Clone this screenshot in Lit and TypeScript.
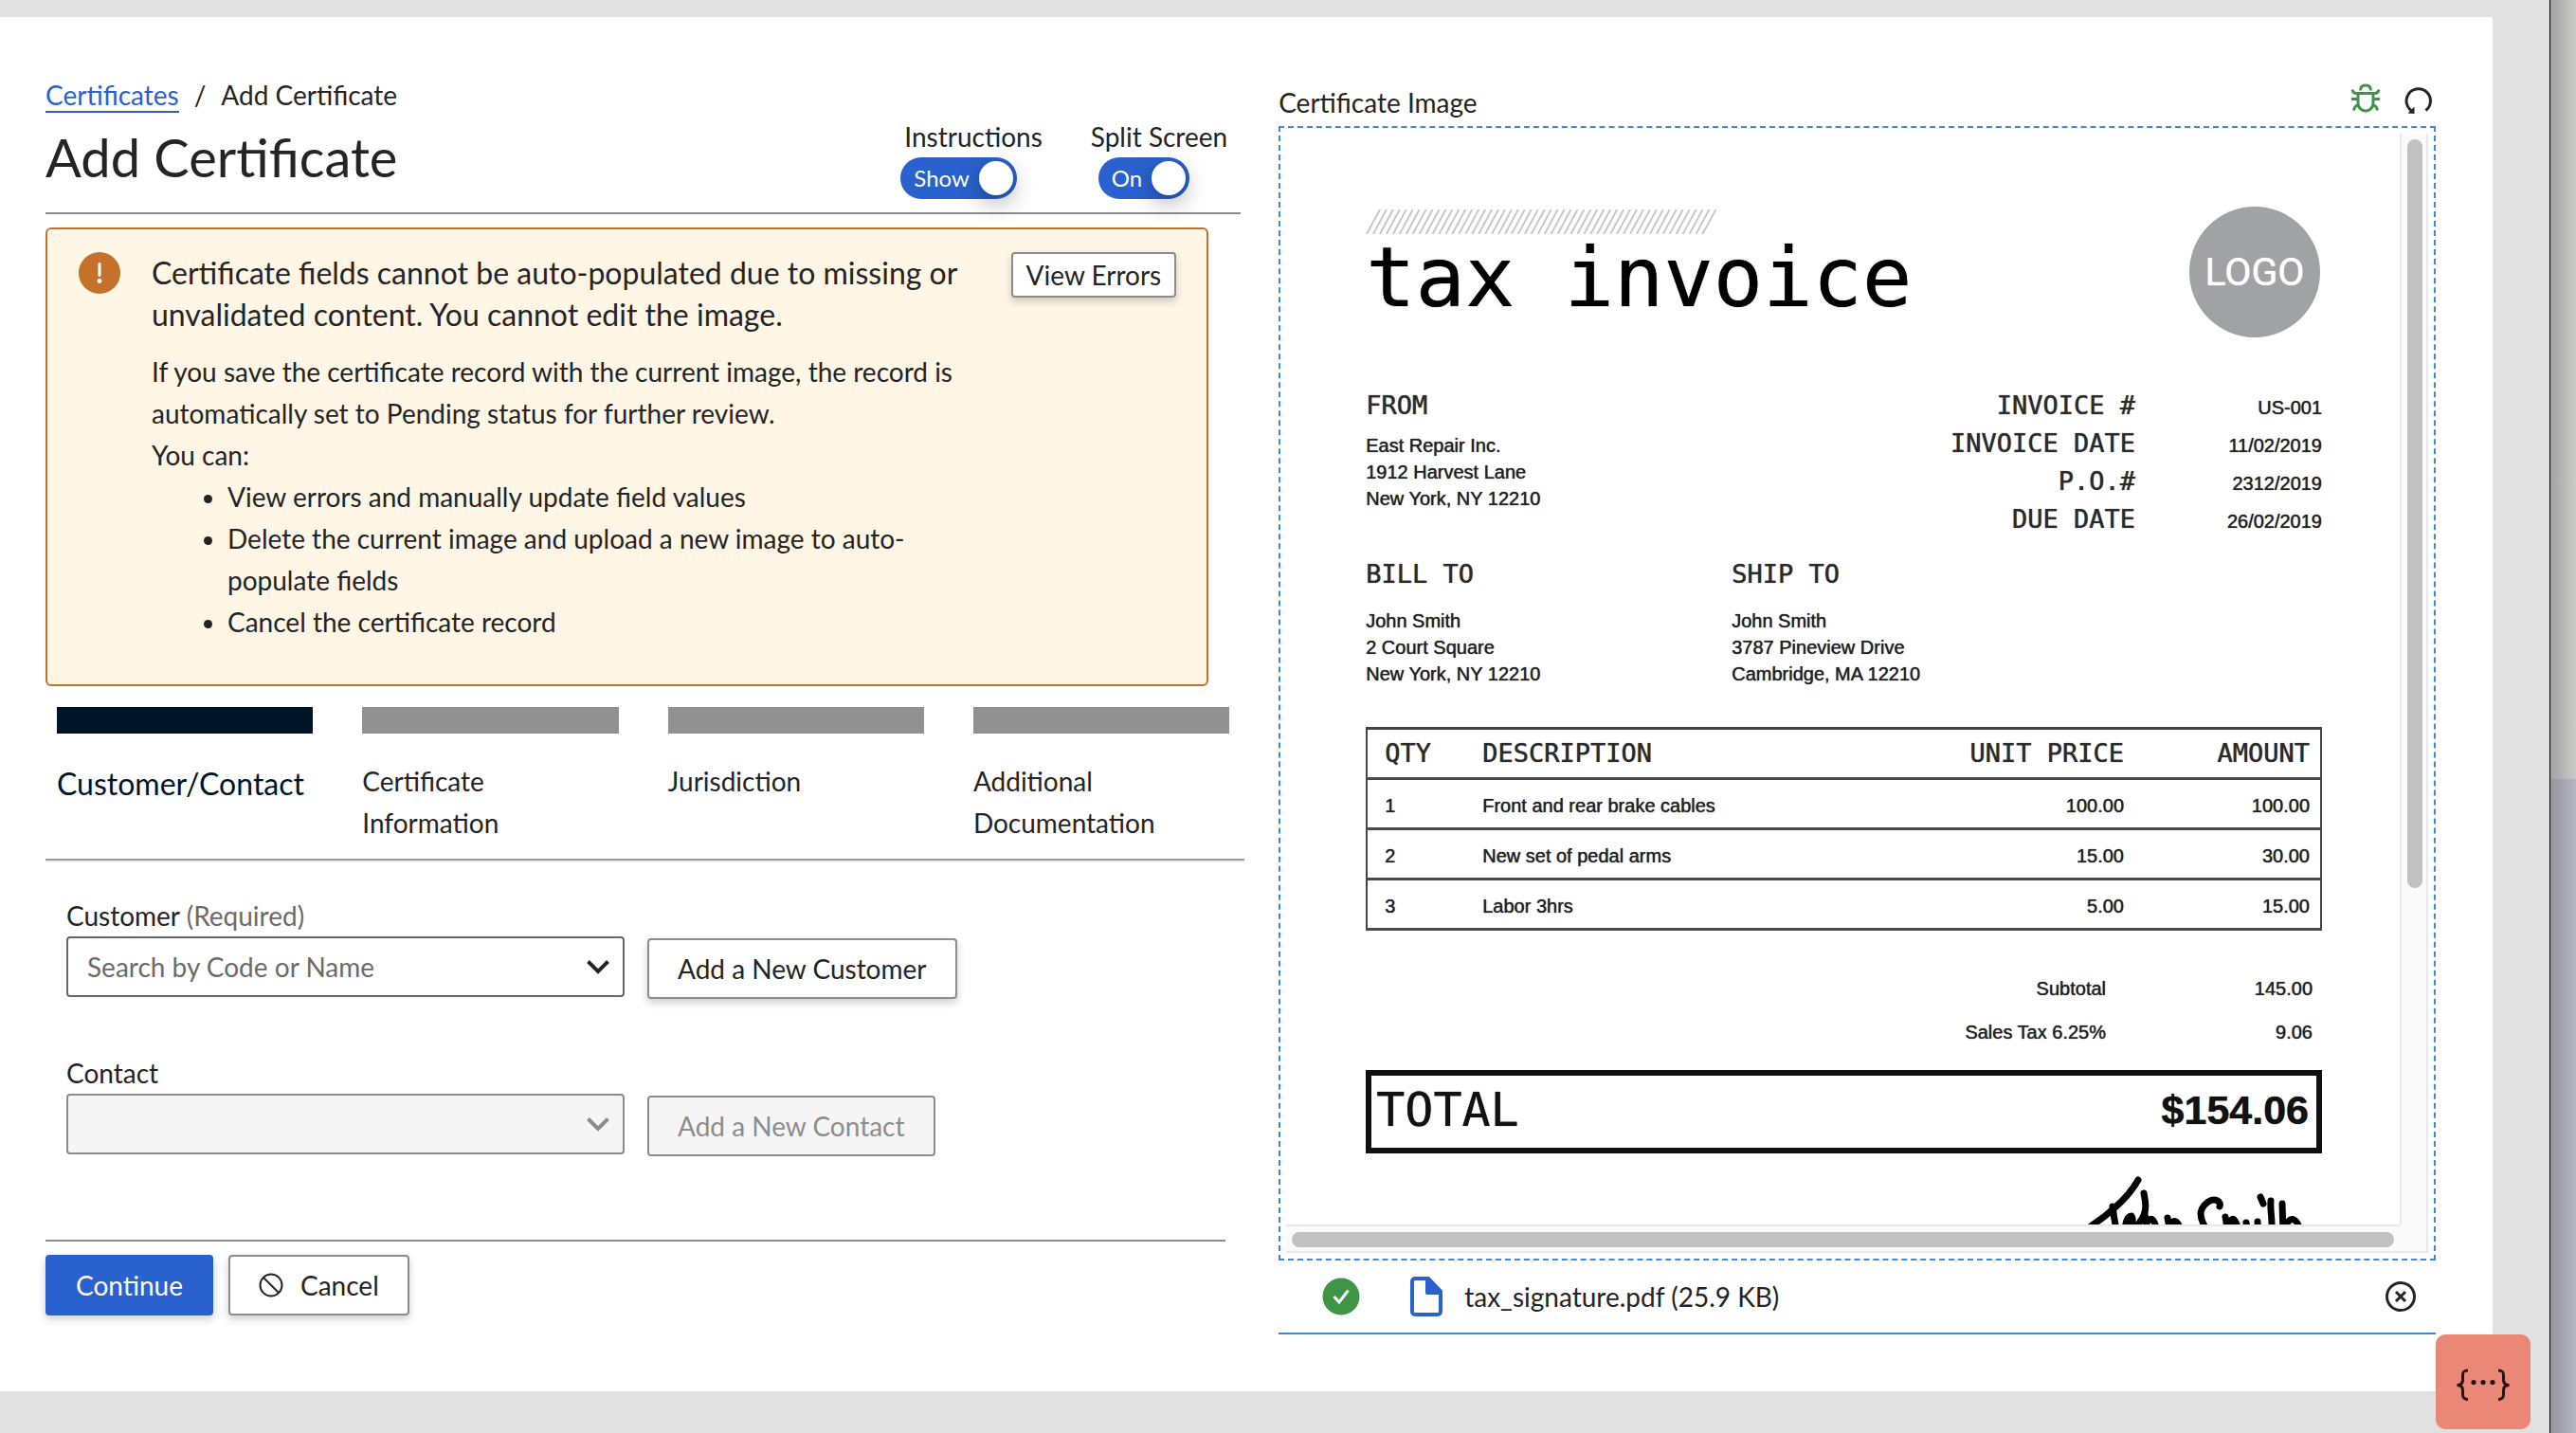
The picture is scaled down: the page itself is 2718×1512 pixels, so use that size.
import { LitElement, html, css, svg } from "lit";
import { customElement, property, state } from "lit/decorators.js";

const HATCH = Array.from({ length: 52 }, (_, i) => i * 6.95);

const STEPS = [
  { label: "Customer/Contact", active: true },
  { label: "Certificate Information", active: false },
  { label: "Jurisdiction", active: false },
  { label: "Additional Documentation", active: false },
];

const META = [
  ["INVOICE #", "US-001"],
  ["INVOICE DATE", "11/02/2019"],
  ["P.O.#", "2312/2019"],
  ["DUE DATE", "26/02/2019"],
];

const ITEMS = [
  ["1", "Front and rear brake cables", "100.00", "100.00"],
  ["2", "New set of pedal arms", "15.00", "30.00"],
  ["3", "Labor 3hrs", "5.00", "15.00"],
];

@customElement("tax-invoice")
export class TaxInvoice extends LitElement {
  static styles = css`
    :host {
      display: block;
      padding: 77px 82px 0 84px;
      font: 20px/28px "Liberation Sans", Arial, sans-serif;
      color: #222;
      text-shadow: 0 0 1px currentColor;
    }
    * { box-sizing: border-box; }
    h2, h3, p, dl, dd, dt { margin: 0; font-weight: 400; }
    .top { display: flex; justify-content: space-between; align-items: flex-start; padding-right: 2px; }
    .hatch { display: block; margin-top: 3px; width: 372px; height: 26px; stroke: #c8c8c8; stroke-width: 2; }
    h2 { font: 87px/92px "DejaVu Sans Mono", monospace; color: #000; white-space: pre; }
    .logo {
      width: 138px; height: 138px; border-radius: 50%; background: #a1a2a4; color: #fff;
      display: flex; align-items: center; justify-content: center;
      font: 41px/48px Roboto, Arial, sans-serif;
    }
    h3, dt, th { font: 27px/40px "DejaVu Sans Mono", monospace; color: #2b2b2b; }
    .origin { display: flex; justify-content: space-between; margin-top: 52px; }
    .origin p { margin-top: 8px; }
    .meta { display: grid; grid-template-columns: auto 197px; grid-auto-rows: 40px; align-items: baseline; line-height: 40px; text-align: right; }
    .parties { display: flex; margin-top: 18px; }
    .party { flex: 0 0 386px; }
    .party p { margin-top: 15px; }
    table { width: 100%; margin-top: 42px; border-collapse: collapse; table-layout: fixed; border: 2px solid #444; border-width: 3px 2px; }
    th, td { height: 53px; padding: 0; text-align: left; border-bottom: 3px solid #4a4a4a; }
    td { padding-top: 4px; }
    .qty { width: 122px; padding-left: 18px; }
    .price { width: 200px; text-align: right; }
    .amount { width: 208px; padding-right: 11px; text-align: right; }
    .sums { display: grid; grid-template-columns: 1fr 218px; margin-top: 38px; padding-right: 10px; line-height: 46px; text-align: right; }
    .sums dt { font: inherit; color: inherit; }
    .total {
      display: flex; justify-content: space-between; align-items: center; height: 88px; margin-top: 17px;
      padding: 0 8px 4px 5px; border: 6px solid #111; color: #111;
      font: 50px/64px "DejaVu Sans Mono", monospace;
    }
    .total strong { font: bold 43px/64px "Liberation Sans", Arial, sans-serif; }
    .sign { display: block; width: 232px; height: 90px; margin: 24px 18px 0 auto; fill: none; stroke: #000; stroke-width: 7; stroke-linecap: round; stroke-linejoin: round; }
  `;

  render() {
    return html`
      <div class="top">
        <div>
          <svg class="hatch" viewBox="0 0 372 26" aria-hidden="true">
            ${HATCH.map((x) => svg`<line x1=${x + 1} y1="26" x2=${x + 15} y2="0"></line>`)}
          </svg>
          <h2>tax invoice</h2>
        </div>
        <div class="logo">LOGO</div>
      </div>
      <div class="origin">
        <div>
          <h3>FROM</h3>
          <p>East Repair Inc.<br />1912 Harvest Lane<br />New York, NY 12210</p>
        </div>
        <dl class="meta">${META.map(([k, v]) => html`<dt>${k}</dt><dd>${v}</dd>`)}</dl>
      </div>
      <div class="parties">
        <div class="party">
          <h3>BILL TO</h3>
          <p>John Smith<br />2 Court Square<br />New York, NY 12210</p>
        </div>
        <div class="party">
          <h3>SHIP TO</h3>
          <p>John Smith<br />3787 Pineview Drive<br />Cambridge, MA 12210</p>
        </div>
      </div>
      <table>
        <thead>
          <tr>
            <th class="qty" scope="col">QTY</th>
            <th scope="col">DESCRIPTION</th>
            <th class="price" scope="col">UNIT PRICE</th>
            <th class="amount" scope="col">AMOUNT</th>
          </tr>
        </thead>
        <tbody>
          ${ITEMS.map(
            ([q, d, p, a]) => html`<tr>
              <td class="qty">${q}</td><td>${d}</td><td class="price">${p}</td><td class="amount">${a}</td>
            </tr>`
          )}
        </tbody>
      </table>
      <dl class="sums">
        <dt>Subtotal</dt><dd>145.00</dd>
        <dt>Sales Tax 6.25%</dt><dd>9.06</dd>
      </dl>
      <div class="total"><span>TOTAL</span><strong>$154.06</strong></div>
      <svg class="sign" viewBox="0 0 232 90" role="img" aria-label="Signature">
        <path d="M56 4C48 18 38 28 28 36C20 44 12 48 2 56" />
        <path d="M29 32C30 40 31 48 34 60" />
        <path d="M42 56C43 47 46 42 49 42C52 46 49 54 46 60M50 48L56 60M62 18C64 28 66 38 58 48C55 52 56 58 58 60M63 40L66 60M66 48C70 42 74 46 76 60" />
        <path d="M87 44L90 60M90 50C95 45 98 47 102 60" />
        <path d="M142 32C144 26 137 23 130 27C122 33 118 40 128 56" />
        <path d="M148 43L151 60M152 52C155 42 158 42 163 60M170 49L172 60M182 48L183 60" />
        <path d="M185 22L188 29M196 26C195 36 198 46 197 60M208 29L209 60M211 54C216 42 222 42 228 58" />
      </svg>
    `;
  }
}

@customElement("toggle-switch")
export class ToggleSwitch extends LitElement {
  @property() label = "";
  @property() text = "";
  static styles = css`
    :host { display: block; color: #242424; }
    .caption { display: block; padding: 0 4px; line-height: 44px; cursor: pointer; }
    .track {
      position: relative; display: inline-flex; align-items: center; gap: 10px; height: 44px;
      padding: 0 4px 0 14px; border-radius: 22px; background: #2962cf; color: #fff; font-size: 24px; vertical-align: top;
    }
    input { position: absolute; inset: 0; width: 100%; height: 100%; margin: 0; opacity: 0; cursor: pointer; }
    .knob { width: 36px; height: 36px; border-radius: 50%; background: #fff; box-shadow: 0 8px 24px rgba(0, 0, 0, 0.32); }
    :host([inset]) .track { margin-left: 8px; }
    :host([inset]) .caption { padding: 0; }
  `;
  render() {
    return html`
      <label class="caption" for="box">${this.label}</label>
      <span class="track"><span>${this.text}</span><span class="knob"></span>
        <input id="box" type="checkbox" role="switch" checked />
      </span>
    `;
  }
}

@customElement("app-root")
export class AppRoot extends LitElement {
  @state() private steps = STEPS;

  static styles = css`
    :host {
      display: flex;
      min-height: 100vh;
      background: #e1e1e1;
      font: 28px/44px Lato, "Open Sans", sans-serif;
      color: #242424;
    }
    * { box-sizing: border-box; }
    h1, h2, p, ul, ol { margin: 0; padding: 0; font-weight: 400; }
    button, select { font: inherit; color: inherit; }
    button { cursor: pointer; }

    .window { flex: 1; min-width: 0; padding: 18px 60px 44px 0; }
    .page {
      display: grid; grid-template-columns: 57fr 55fr; gap: 36px;
      min-height: 1450px; padding: 60px 60px 0 48px; background: #fff;
    }
    .page > * { min-width: 0; }
    .desktop { flex: 0 0 28px; display: flex; flex-direction: column; border-left: 1px solid #000; }
    .desktop .upper { flex: 822; background: linear-gradient(90deg, #a2a2a2, #cbcbca); }
    .desktop .lower { flex: 690; background: linear-gradient(90deg, #94959c, #b4b6c3); }

    .head { display: flex; justify-content: space-between; align-items: flex-end; margin-right: 4px; padding: 0 14px 14px 0; border-bottom: 2px solid #8c8c8c; }
    .crumbs { display: flex; gap: 16px; list-style: none; }
    .crumbs a { display: inline-block; line-height: 34px; color: #2962cf; text-decoration: none; border-bottom: 2px solid #2962cf; }
    .crumbs li { height: 44px; }
    h1 { margin: 12px 0; font-size: 56px; line-height: 64px; }
    .toggles { display: flex; gap: 47px; }

    .alert {
      display: flex; align-items: flex-start; margin: 14px 38px 0 0; padding: 24px 32px 44px 33px;
      background: #fff6e6; border: 2px solid #c5702b; border-radius: 6px;
    }
    .alert > svg { flex: none; width: 44px; height: 44px; }
    .message { flex: 1; margin: 0 32px 0 33px; }
    .message h2 { margin-bottom: 16px; font-size: 32px; line-height: 44px; }
    .message ul { padding-left: 80px; }

    .btn {
      display: inline-flex; align-items: center; justify-content: center; gap: 18px; height: 64px; padding: 0 30px;
      background: #fff; border: 2px solid #8c8c8c; border-radius: 4px; line-height: 44px; white-space: nowrap;
      box-shadow: 0 4px 8px rgba(20, 40, 30, 0.22);
    }
    .btn.small { height: 48px; padding: 0 14px; }
    .btn.primary { background: #2962cf; border-color: #2962cf; color: #fff; }
    .btn:disabled { background: #f5f5f5; color: #8c8c8c; box-shadow: none; cursor: default; }
    .btn svg { width: 26px; height: 26px; fill: none; stroke: #242424; stroke-width: 2; }

    .steps { display: grid; grid-template-columns: repeat(4, 1fr); gap: 52px; list-style: none; margin-top: 22px; padding: 0 16px 0 12px; }
    .steps li::before { content: ""; display: block; height: 28px; margin-bottom: 28px; background: #919191; }
    .steps .active { font-size: 32px; line-height: 50px; color: #001427; }
    .steps .active::before { background: #001427; }
    hr { margin: 16px 0 0; border: 2px solid #999; border-width: 2px 0; border-bottom-color: #eee; }

    .form { padding: 34px 0 88px 22px; }
    .field + .field { margin-top: 56px; }
    .field label { display: block; }
    .field small { font-size: inherit; color: #6b6b6b; }
    .row { display: flex; gap: 24px; align-items: flex-start; }
    .row .btn { margin-top: 2px; }
    .combo { position: relative; flex: 0 1 589px; }
    .combo select {
      appearance: none; display: block; width: 100%; height: 64px; padding: 0 60px 0 20px;
      background: #fff; border: 2px solid #666; border-radius: 4px; color: #6b6b6b;
    }
    .combo select:disabled { background: #f5f5f5; border-color: #8c8c8c; opacity: 1; }
    .combo svg { position: absolute; right: 15px; top: 24px; width: 26px; height: 16px; fill: none; stroke: #242424; stroke-width: 4; pointer-events: none; }
    .combo select:disabled + svg { stroke: #8c8c8c; }
    .actions { display: flex; gap: 16px; margin-right: 20px; padding-top: 14px; border-top: 2px solid #8c8c8c; }

    .preview { padding-top: 8px; }
    .bar { display: flex; justify-content: space-between; align-items: flex-start; margin-bottom: 3px; padding-right: 3px; }
    .tools { display: flex; gap: 23px; }
    .tools button, .file button { display: block; padding: 0; border: 0; background: none; }
    .tools svg, .file button svg { display: block; width: 32px; height: 36px; fill: none; stroke-width: 3; }
    .bug { stroke: #3f9447; }
    .redo { stroke: #242424; }

    .drop { padding: 6px; border: 2px dashed #3c8bd9; }
    .viewer { display: grid; grid-template: minmax(0, 1fr) 28px / minmax(0, 1fr) 28px; height: 1181px; background: #fafafa; border: 2px solid #e8e8e8; border-width: 0 2px 2px 0; }
    .viewport { overflow: hidden; background: #fff; }
    .vtrack { padding: 6px 6px 0; border-left: 2px solid #e8e8e8; }
    .htrack { padding: 6px; border-top: 2px solid #e8e8e8; }
    .thumb { border-radius: 8px; background: #c1c1c1; }
    .vtrack .thumb { width: 16px; height: 69%; }
    .htrack .thumb { height: 16px; }

    .file { display: flex; align-items: center; height: 78px; padding: 0 21px 0 46px; border-bottom: 2px solid #3c8bd9; }
    .file .ok { width: 40px; height: 40px; margin-right: 53px; }
    .file .doc { width: 34px; height: 42px; margin-right: 23px; }
    .file button { margin-left: auto; }
    .file button svg { height: 32px; stroke: #242424; }

    .fab {
      position: absolute; right: 48px; top: 1408px; width: 100px; height: 100px; padding: 0;
      border: 0; border-radius: 10px; background: #eb8777;
    }
    .fab svg { display: block; width: 100px; height: 100px; fill: none; stroke: #241414; stroke-width: 3; }
  `;

  render() {
    return html`
      <div class="window">
        <main class="page">
          <section>
            <header class="head">
              <div>
                <ol class="crumbs">
                  <li><a href="#certificates">Certificates</a></li>
                  <li aria-hidden="true">/</li>
                  <li>Add Certificate</li>
                </ol>
                <h1>Add Certificate</h1>
              </div>
              <div class="toggles">
                <toggle-switch label="Instructions" text="Show"></toggle-switch>
                <toggle-switch inset label="Split Screen" text="On"></toggle-switch>
              </div>
            </header>

            <div class="alert" role="alert">
              <svg viewBox="0 0 44 44" aria-hidden="true">
                <circle cx="22" cy="22" r="22" fill="#c5702b" />
                <path d="M22 12.500V24.500" stroke="#fff" stroke-width="3" stroke-linecap="round" />
                <circle cx="22" cy="30.500" r="2.400" fill="#fff" />
              </svg>
              <div class="message">
                <h2>Certificate fields cannot be auto-populated due to missing or unvalidated content. You cannot edit the image.</h2>
                <p>If you save the certificate record with the current image, the record is automatically set to Pending status for further review.</p>
                <p>You can:</p>
                <ul>
                  <li>View errors and manually update field values</li>
                  <li>Delete the current image and upload a new image to auto-populate fields</li>
                  <li>Cancel the certificate record</li>
                </ul>
              </div>
              <button class="btn small">View Errors</button>
            </div>

            <ol class="steps">
              ${this.steps.map((s) => html`<li class=${s.active ? "active" : ""}>${s.label}</li>`)}
            </ol>
            <hr />

            <div class="form">
              <div class="field">
                <label for="customer">Customer <small>(Required)</small></label>
                <div class="row">
                  <div class="combo">
                    <select id="customer"><option>Search by Code or Name</option></select>
                    <svg viewBox="0 0 26 16" aria-hidden="true"><path d="M2.500 2.500L13 13L23.500 2.500" /></svg>
                  </div>
                  <button class="btn">Add a New Customer</button>
                </div>
              </div>
              <div class="field">
                <label for="contact">Contact</label>
                <div class="row">
                  <div class="combo">
                    <select id="contact" disabled><option></option></select>
                    <svg viewBox="0 0 26 16" aria-hidden="true"><path d="M2.500 2.500L13 13L23.500 2.500" /></svg>
                  </div>
                  <button class="btn" disabled>Add a New Contact</button>
                </div>
              </div>
            </div>

            <div class="actions">
              <button class="btn primary">Continue</button>
              <button class="btn">
                <svg viewBox="0 0 26 26" aria-hidden="true"><circle cx="13" cy="13" r="11.500" /><path d="M5 5L21 21" /></svg>
                Cancel
              </button>
            </div>
          </section>

          <section class="preview">
            <div class="bar">
              <span>Certificate Image</span>
              <div class="tools">
                <button aria-label="Debug">
                  <svg class="bug" viewBox="0 0 32 36" aria-hidden="true">
                    <path d="M10.500 9.500C10.500 5.500 12.500 4 16 4S21.500 5.500 21.500 9.500" />
                    <path d="M2 8.500C2.500 11 4 12.500 6.500 12.500H25.500C28 12.500 29.500 11 30 8.500" />
                    <path d="M8 12.500V23A8 8 0 0 0 24 23V12.500M1 18.500H8M24 18.500H31M8 25C5.500 25.500 4 27 3.500 30.500M24 25C26.500 25.500 28 27 28.500 30.500" />
                  </svg>
                </button>
                <button aria-label="Reload">
                  <svg class="redo" viewBox="0 0 32 36" aria-hidden="true">
                    <path d="M24.500 30.500A12.700 12.700 0 1 0 10.500 31.500" />
                    <path d="M12.500 26.500V34L5.500 33.500Z" fill="#242424" stroke="none" />
                  </svg>
                </button>
              </div>
            </div>
            <div class="drop">
              <div class="viewer">
                <div class="viewport"><tax-invoice></tax-invoice></div>
                <div class="vtrack"><div class="thumb"></div></div>
                <div class="htrack"><div class="thumb"></div></div>
              </div>
            </div>
            <div class="file">
              <svg class="ok" viewBox="0 0 40 40" aria-hidden="true">
                <circle cx="20" cy="20" r="19.500" fill="#3f9447" />
                <path d="M12.500 20L18 26L27.500 13.500" fill="none" stroke="#fff" stroke-width="3" />
              </svg>
              <svg class="doc" viewBox="0 0 34 42" aria-hidden="true">
                <path d="M5 2H19L32 15.500V37A3 3 0 0 1 29 40H5A3 3 0 0 1 2 37V5A3 3 0 0 1 5 2Z" fill="none" stroke="#2962cf" stroke-width="4" />
                <path d="M16 1H20L33 15V19H18A2 2 0 0 1 16 17Z" fill="#2962cf" />
              </svg>
              <span>tax_signature.pdf (25.9 KB)</span>
              <button aria-label="Remove file">
                <svg viewBox="0 0 32 32" aria-hidden="true"><circle cx="16" cy="16" r="14.500" /><path d="M11 11L21 21M21 11L11 21" /></svg>
              </button>
            </div>
          </section>
        </main>
      </div>
      <div class="desktop" aria-hidden="true"><div class="upper"></div><div class="lower"></div></div>
      <button class="fab" aria-label="Developer tools">
        <svg viewBox="0 0 100 100" aria-hidden="true">
          <path d="M34 38C29 38 28.500 40 28.500 43V48C28.500 51.500 27 53.500 22.500 53.500C27 53.500 28.500 55.500 28.500 59V63C28.500 66.500 29.500 68.500 34 68.500" />
          <path d="M66 38C71 38 71.500 40 71.500 43V48C71.500 51.500 73 53.500 77.500 53.500C73 53.500 71.500 55.500 71.500 59V63C71.500 66.500 70.500 68.500 66 68.500" />
          <g fill="#241414" stroke="none"><circle cx="40" cy="50.500" r="2.600" /><circle cx="50" cy="50.500" r="2.600" /><circle cx="60" cy="50.500" r="2.600" /></g>
        </svg>
      </button>
    `;
  }
}
